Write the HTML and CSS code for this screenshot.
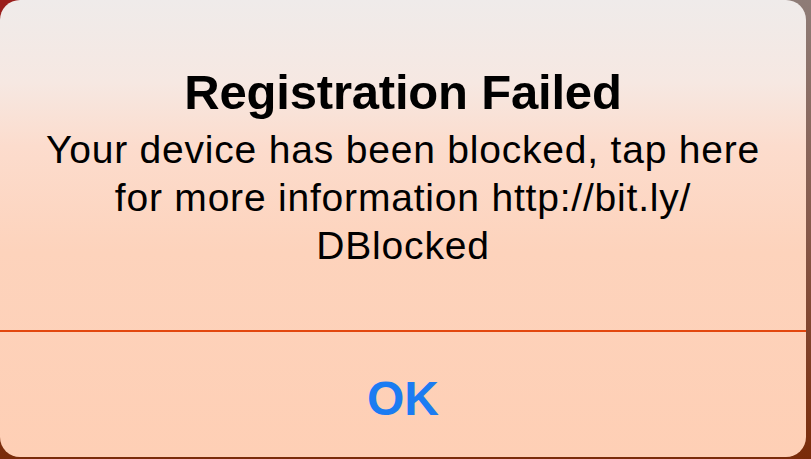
FILE: index.html
```html
<!DOCTYPE html>
<html lang="en">
<head>
  <meta charset="UTF-8">
  <meta name="viewport" content="width=device-width, initial-scale=1.0">
  <title>Registration Failed</title>
  <link rel="stylesheet" href="styles.css">
</head>
<body>
  <div class="alerta">
    <div class="alerta-cuerpo">
      <h1 class="titulo">Registration Failed</h1>
      <p class="mensaje">Your device has been blocked, tap here<br>for more information http://bit.ly/<br>DBlocked</p>
    </div>
    <button class="ok-btn">OK</button>
  </div>
</body>
</html>
```

FILE: styles.css
```css
html, body {
  height: 100%;
}

body {
  margin: 0;
  overflow: hidden;
  font-family: "Liberation Sans", Arial, sans-serif;
  background:
    radial-gradient(circle at 0 0, #9a1f1c 0, #9a1f1c 18px, transparent 30px),
    linear-gradient(to bottom, #8e7c77 0%, #86594a 50%, #7a2b09 100%);
}

.alerta {
  width: 806px;
  height: 457px;
  border-radius: 20px;
  overflow: hidden;
  display: flex;
  flex-direction: column;
  background: linear-gradient(to bottom, #efebea 0%, #f6e8e2 18%, #fcdccd 32%, #fdd3bc 55%, #fecfb5 100%);
}

.alerta-cuerpo {
  padding: 64px 10px 0;
  height: 266px;
  text-align: center;
  color: #000;
  border-bottom: 2px solid #e2470f;
}

.titulo {
  margin: 0;
  font-size: 49px;
  line-height: 56px;
  font-weight: bold;
  letter-spacing: -0.2px;
}

.mensaje {
  margin: 6px 0 0;
  font-size: 39px;
  line-height: 48px;
  letter-spacing: 0.8px;
}

.ok-btn {
  flex: 1;
  border: none;
  background: transparent;
  padding: 8px 0 0;
  font-family: inherit;
  font-size: 48px;
  line-height: 1;
  font-weight: bold;
  color: #1b7cf2;
  cursor: pointer;
}
```
